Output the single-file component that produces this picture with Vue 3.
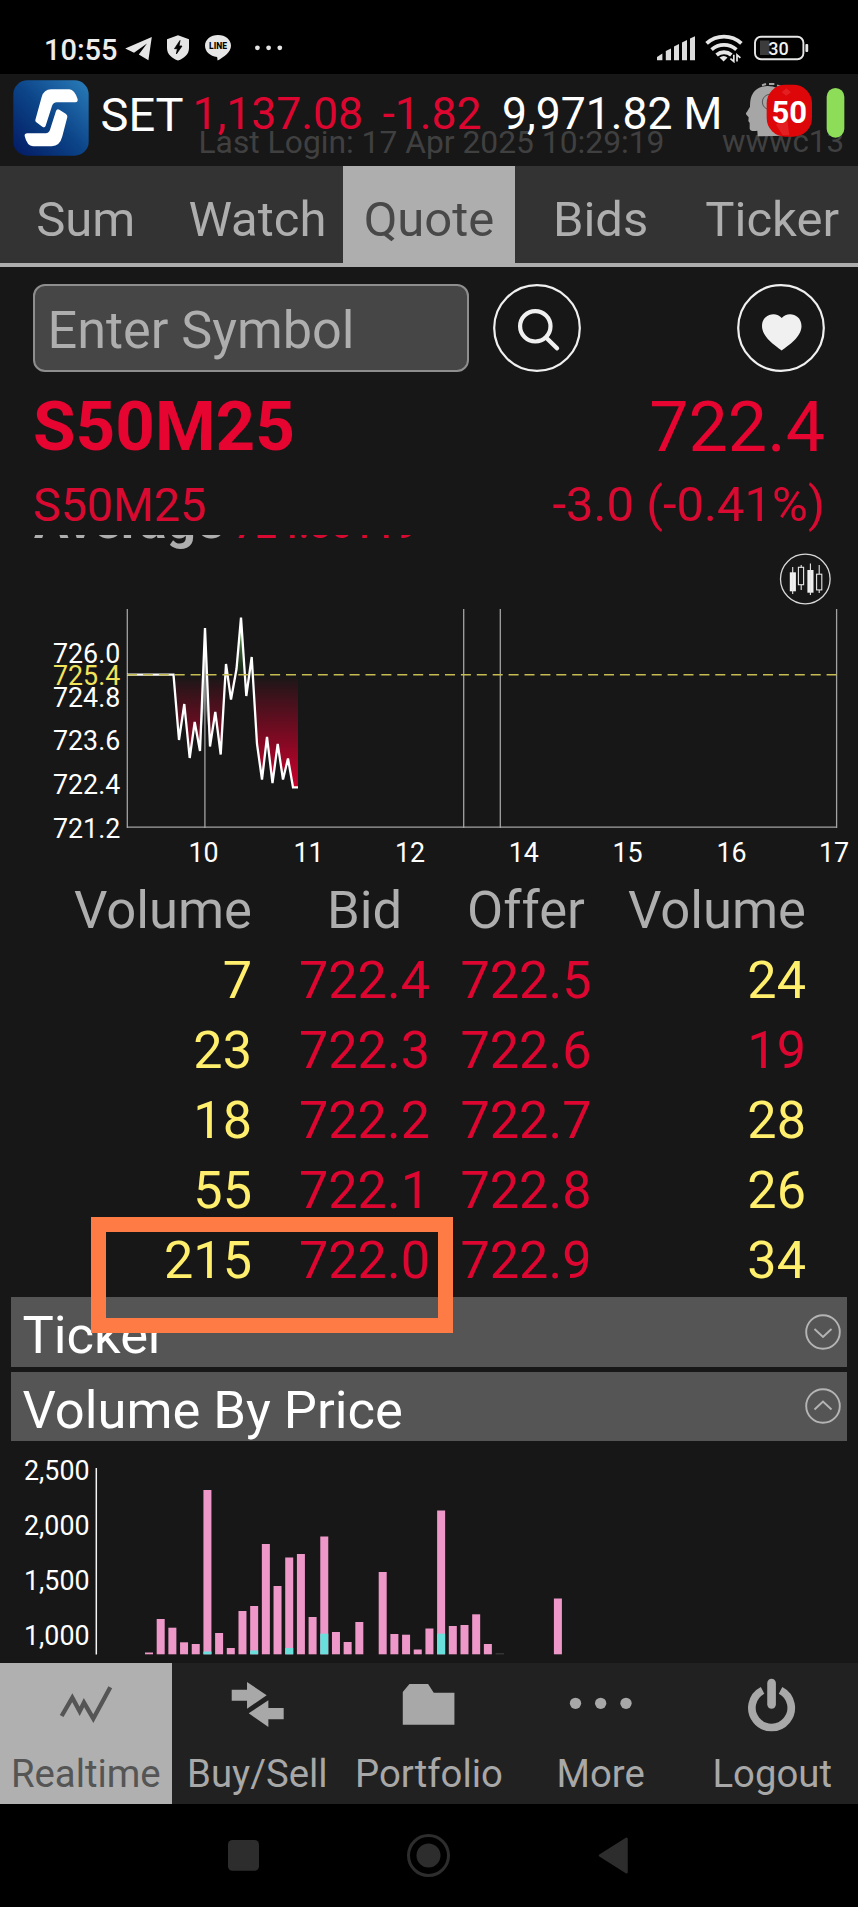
<script setup>
const tabs = ['Sum', 'Watch', 'Quote', 'Bids', 'Ticker']
const activeTab = 'Quote'

const depth = [
  { bv: '7', bid: '722.4', offer: '722.5', ov: '24' },
  { bv: '23', bid: '722.3', offer: '722.6', ov: '19', down: true },
  { bv: '18', bid: '722.2', offer: '722.7', ov: '28' },
  { bv: '55', bid: '722.1', offer: '722.8', ov: '26' },
  { bv: '215', bid: '722.0', offer: '722.9', ov: '34' },
]

const priceLabels = [
  ['726.0', 662.7], ['724.8', 706.5], ['723.6', 750], ['722.4', 794], ['721.2', 837.5], ['725.4', 685, true],
]
const hourLabels = [
  ['10', 203.5], ['11', 308.5], ['12', 410], ['14', 523.7], ['15', 627.5], ['16', 731.5], ['17', 834],
]
const prevClose = 674.7
const series = [
  [127, 674.7], [173.5, 674.7], [179, 740], [184.3, 704], [189.7, 758], [194.7, 722], [200, 751],
  [205, 628], [210, 746.5], [215.3, 712], [220.7, 754.5], [226, 664], [231, 699.5], [236.5, 669],
  [241, 617.5], [246.3, 696], [251.7, 657], [257, 744], [262, 779.5], [267, 737], [272.5, 783],
  [277.7, 744], [283, 779.5], [288, 758.5], [293, 787.3], [298, 787.3],
]
const linePoints = series.map((p) => p.join(',')).join(' ')
const areaPoints = `${linePoints} 298,${prevClose}`

const volumeLabels = [['2,500', 1480.2], ['2,000', 1535], ['1,500', 1590], ['1,000', 1645.3]]
const barTops = [
  1652.5, 1619, 1627.7, 1642.3, 1644, 1490, 1633, 1648, 1611, 1606, 1544, 1586, 1557.5, 1554, 1617, 1536.5,
  1632, 1642, 1622, null, 1572, 1634, 1634.7, 1649.5, 1628.5, 1510.5, 1626, 1625, 1614.3, 1644,
]
const bars = barTops.map((top, i) => ({ x: 145 + i * 11.685, top })).filter((b) => b.top !== null)
bars.push({ x: 553.9, top: 1598.5 })
const openBars = [[5, 1651.5], [9, 1650.5], [12, 1648], [15, 1633.7], [25, 1633.7]]
  .map(([i, top]) => ({ x: 145 + i * 11.685, top }))
</script>

<template>
  <div class="phone">
    <div class="status">
      <span class="clock">10:55</span>
      <svg class="status-icons" width="170" height="30" viewBox="120 32 170 30">
        <path d="M125.2 48.6 L151.8 37 L148.4 60.2 L138.8 54.6 L147 43.5 L134 52.8 Z" fill="#e6e6e6" />
        <path d="M178 35.3 L189 39.3 V48 C189 54.5 184 58.3 178 60.6 C172 58.3 167 54.5 167 48 V39.3 Z" fill="#e6e6e6" />
        <path d="M180 40.5 L174.5 48.7 H177.4 L176.4 54 L182 46 H179 Z" fill="#000" stroke="#000" stroke-width="0.8" />
        <path d="M218 35 C225.4 35 231 39.6 231 45.8 C231 52 224 57 217.6 60.6 C217.2 59 217.6 58 217 57 C210 56.2 205 51.6 205 45.8 C205 39.6 210.6 35 218 35 Z" fill="#e6e6e6" />
        <text x="218" y="49.3" text-anchor="middle" class="line-mark">LINE</text>
        <circle cx="257.4" cy="47.8" r="2.4" fill="#e6e6e6" />
        <circle cx="268.6" cy="47.8" r="2.4" fill="#e6e6e6" />
        <circle cx="279.8" cy="47.8" r="2.4" fill="#e6e6e6" />
      </svg>
      <svg class="status-right" width="158" height="30" viewBox="654 33 158 30">
        <g fill="#dcdcdc">
          <path d="M657 60.3 V57 L662.4 53.5 V60.3 Z" />
          <path d="M665.8 60.3 V51 L671 48.5 V60.3 Z" />
          <path d="M674 60.3 V46.5 L679 44 V60.3 Z" />
          <path d="M682 60.3 V42.5 L687 40 V60.3 Z" />
          <path d="M690 60.3 V38.5 L695 36.3 V60.3 Z" />
        </g>
        <g fill="none" stroke="#e6e6e6" stroke-width="3.8">
          <path d="M706.6 43.4 C716.5 34.4 731.5 34.4 741.4 43.4" />
          <path d="M711.6 49.6 C718.8 43.4 729.2 43.4 736.4 49.6" />
          <path d="M716.6 55 C721 51.3 727 51.3 731.4 55" />
        </g>
        <path d="M719.5 57.5 Q724 54.5 727.5 57.5 L723.6 61.4 Z" fill="#e6e6e6" />
        <path d="M733.8 54.8 V61.5 L730.4 58.6 M737 61.5 V54.8 L740.4 57.8" stroke="#e6e6e6" stroke-width="1.7" fill="none" />
        <rect x="760" y="40.5" width="9.5" height="14.5" fill="#3c3c3c" />
        <rect x="755" y="36.7" width="48.4" height="22.6" rx="6" fill="none" stroke="#e6e6e6" stroke-width="1.9" />
        <rect x="805.4" y="44" width="2.8" height="8" rx="1" fill="#e6e6e6" />
        <text x="778.6" y="54.8" text-anchor="middle" class="battery">30</text>
      </svg>
    </div>

    <header class="top">
      <div class="login"><span>Last Login: 17 Apr 2025 10:29:19</span><span class="host">wwwc13</span></div>
      <svg class="logo" width="76" height="76" viewBox="38 239 228 228">
        <defs>
          <linearGradient id="logoBg" x1="0" y1="1" x2="1" y2="0">
            <stop offset="0" stop-color="#031a63" />
            <stop offset="0.5" stop-color="#0c4488" />
            <stop offset="1" stop-color="#2a7dba" />
          </linearGradient>
        </defs>
        <rect x="39" y="240" width="226" height="226" rx="42" fill="url(#logoBg)" />
        <path d="M105 359 L124 290 Q131 267 152 267 H207 Q223 268 232 297 Q233 306 225 306 H170 Q158 307 155 317 L136 376 Q133 384 126 379 L108 366 Q104 363 105 359 Z" fill="#fff" />
        <path d="M167 332 Q170 324 177 328 L196 340 Q202 344 201 350 L186 408 Q179 437 154 438 H98 Q80 437 73 407 Q72 399 81 399 H136 Q146 398 149 388 Z" fill="#fff" />
      </svg>
      <span class="set">SET</span>
      <span class="idx red">1,137.08</span>
      <span class="idx red">-1.82</span>
      <span class="idx">9,971.82 M</span>
      <svg class="badge" width="112" height="62" viewBox="940 235 336 186">
        <path d="M990 407 L989 390 Q968 394 966 384 L966 368 Q965 364 962 362 L963 350 L955 341 Q954 337 958 333 L967 318 Q966 268 1003 258 Q1045 250 1075 280 L1070 405 Z" fill="#a6a6a6" />
        <path d="M1003 254 l12 -4 M1024 250 h16 M1048 254 l12 4" stroke="#a6a6a6" stroke-width="6" />
        <circle cx="1027" cy="304" r="23" fill="none" stroke="#555" stroke-width="3" />
        <rect x="1017" y="252" width="136" height="156" rx="56" fill="#dd0609" />
        <path d="M1062 275 l14 -12 l14 12 l-14 10 Z M1045 372 L1078 350 L1085 404 H1065 Z" fill="#e83034" opacity="0.6" />
        <text x="1085" y="366" text-anchor="middle" class="badge-n">50</text>
        <rect x="1197" y="262" width="53" height="149" rx="26.5" fill="#8ddd59" />
      </svg>
    </header>

    <nav class="tabs">
      <div v-for="t in tabs" :key="t" class="tab" :class="{ on: t === activeTab }">{{ t }}</div>
    </nav>

    <main class="body">
      <div class="search">
        <div class="field">Enter Symbol</div>
        <svg class="find" width="88" height="88" viewBox="493 284 88 88">
          <circle cx="537" cy="328" r="42.8" fill="none" stroke="#f0f0f0" stroke-width="2.2" />
          <circle cx="535.3" cy="326.3" r="15.2" fill="none" stroke="#f0f0f0" stroke-width="4.2" />
          <path d="M546.5 338 L557 348.3" stroke="#f0f0f0" stroke-width="4.4" stroke-linecap="round" />
        </svg>
        <svg class="fav" width="88" height="88" viewBox="737 284 88 88">
          <circle cx="781" cy="328" r="42.8" fill="none" stroke="#f0f0f0" stroke-width="2.2" />
          <path d="M781.7 350.5 C775 345.5 762 337 762 326 C762 313.5 776.5 311 781.7 318 C787 311 801.5 313.5 801.5 326 C801.5 337 788.5 345.5 781.7 350.5 Z" fill="#f0f0f0" />
        </svg>
      </div>

      <div class="quote"><b>S50M25</b><span>722.4</span></div>
      <div class="sub"><span class="name">S50M25</span><span>-3.0 (-0.41%)</span></div>

      <div class="scroll">
        <div class="avg"><b>Average</b><span>724.80119</span></div>

        <svg class="chart" width="858" height="324" viewBox="0 551 858 324">
          <defs>
            <linearGradient id="loss" gradientUnits="userSpaceOnUse" x1="0" y1="675" x2="0" y2="787">
              <stop offset="0" stop-color="#c8002b" stop-opacity="0" />
              <stop offset="0.2" stop-color="#c8002b" stop-opacity="0.22" />
              <stop offset="1" stop-color="#cc002c" />
            </linearGradient>
            <linearGradient id="gain" gradientUnits="userSpaceOnUse" x1="0" y1="618" x2="0" y2="675">
              <stop offset="0" stop-color="#7fd06a" />
              <stop offset="1" stop-color="#2a6a24" stop-opacity="0.15" />
            </linearGradient>
            <clipPath id="above"><rect x="127" y="600" width="710" height="74.7" /></clipPath>
            <clipPath id="below"><rect x="127" y="674.7" width="710" height="153" /></clipPath>
          </defs>
          <circle cx="805.3" cy="579" r="24.8" fill="none" stroke="#d8d8d8" stroke-width="1.3" />
          <g fill="#f0f0f0">
            <rect x="789.8" y="572.3" width="6.1" height="19" />
            <rect x="807.4" y="570" width="6.1" height="22.7" />
          </g>
          <g fill="none" stroke="#e6e6e6" stroke-width="1.1">
            <path d="M792.7 567 V594 M810.4 563.5 V595 M801.2 565 V567.5 M801.2 585 V590 M819.2 565 V574 M819.2 590 V593" />
            <rect x="798.4" y="567.3" width="5.2" height="17.4" />
            <rect x="816.6" y="574.2" width="5.2" height="15.7" />
          </g>

          <polygon :points="areaPoints" fill="url(#gain)" clip-path="url(#above)" />
          <polygon :points="areaPoints" fill="url(#loss)" clip-path="url(#below)" />
          <path d="M204.9 632 L200.5 740 L204.9 700 L209.5 740 Z" fill="#8a8a8a" opacity="0.6" />
          <path d="M127.3 609 V828 M463.7 609 V828 M500.3 609 V828 M836.6 609 V828 M204.9 640 V828 M127 827.2 H837" fill="none" stroke="#a2a2a2" stroke-width="1.3" />
          <polyline :points="linePoints" fill="none" stroke="#fff" stroke-width="2.3" stroke-linejoin="miter" stroke-miterlimit="2" />
          <path d="M127 674.8 H836.5" stroke="#c6bb52" stroke-width="1.5" stroke-dasharray="10 5.9" />
          <text v-for="[t, y, ref] in priceLabels" :key="t" x="120.3" :y="y" text-anchor="end" class="axis" :class="{ ref }">{{ t }}</text>
          <text v-for="[t, x] in hourLabels" :key="t" :x="x" y="862" text-anchor="middle" class="axis">{{ t }}</text>
        </svg>

        <div class="depth">
          <div class="row head"><span>Volume</span><span>Bid</span><span>Offer</span><span>Volume</span></div>
          <div v-for="r in depth" :key="r.bid" class="row">
            <span class="vol">{{ r.bv }}</span><span class="px">{{ r.bid }}</span>
            <span class="px">{{ r.offer }}</span><span :class="r.down ? 'px' : 'vol'">{{ r.ov }}</span>
          </div>
          <div class="marker"></div>
        </div>

        <div class="panel">
          <span>Ticker</span>
          <svg width="38" height="38" viewBox="-19 -19 38 38" fill="none" stroke="#b4b4b4" stroke-width="1.9">
            <circle r="16.8" /><path d="M-8.5 -3 L0 5 L8.5 -3" />
          </svg>
        </div>
        <div class="panel">
          <span>Volume By Price</span>
          <svg width="38" height="38" viewBox="-19 -19 38 38" fill="none" stroke="#b4b4b4" stroke-width="1.9">
            <circle r="16.8" /><path d="M-8.5 3.5 L0 -4.5 L8.5 3.5" />
          </svg>
        </div>

        <svg class="chart" width="858" height="222" viewBox="0 1441 858 222">
          <path d="M96.3 1468 V1654.5" stroke="#f4f4f4" stroke-width="1.5" />
          <text v-for="[t, y] in volumeLabels" :key="t" x="89.5" :y="y" text-anchor="end" class="axis">{{ t }}</text>
          <rect v-for="b in bars" :key="b.x" :x="b.x" :y="b.top" width="8" :height="1654.3 - b.top" fill="#ee98c9" />
          <rect v-for="b in openBars" :key="b.x" :x="b.x" :y="b.top" width="8" :height="1654.3 - b.top" fill="#6ae0dc" />
          <rect x="495.6" y="1653" width="8.5" height="1.5" fill="#343434" />
        </svg>
      </div>
    </main>

    <nav class="bottom">
      <div class="item on">
        <svg width="171.6" height="80" viewBox="0 39 515 240"><polyline points="185,198 217,143 239,184 252,158 280,206 331,112" fill="none" stroke="#555" stroke-width="13" stroke-miterlimit="6" /></svg>
        <span>Realtime</span>
      </div>
      <div class="item">
        <svg width="171.6" height="80" viewBox="514.8 39 515 240" fill="#a8a8a8">
          <path d="M694 119 H740 V96 L799 136 L740 176 V152 H694 Z" /><path d="M850 174 H804 V151 L745 190 L804 231 V208 H850 Z" />
        </svg>
        <span>Buy/Sell</span>
      </div>
      <div class="item">
        <svg width="171.6" height="80" viewBox="1029.6 39 515 240" fill="#a8a8a8"><path d="M1209 224 V126 L1229 102 H1285 L1302 128 H1364 V224 Z" /></svg>
        <span>Portfolio</span>
      </div>
      <div class="item">
        <svg width="171.6" height="80" viewBox="260.4 39 515 240" fill="#a8a8a8"><circle cx="442" cy="160" r="17" /><circle cx="517.5" cy="160" r="17" /><circle cx="593.5" cy="160" r="17" /></svg>
        <span>More</span>
      </div>
      <div class="item">
        <svg width="171.6" height="80" viewBox="775.2 39 515 240" fill="none" stroke="#a8a8a8">
          <path d="M1005 121 A59 59 0 1 0 1059 121" stroke-width="23" /><path d="M1032 99 V163" stroke-width="26" stroke-linecap="round" />
        </svg>
        <span>Logout</span>
      </div>
    </nav>

    <svg class="system" width="858" height="103" viewBox="0 1804 858 103">
      <rect x="228" y="1840" width="31" height="30.7" rx="4.5" fill="#2d2d2d" />
      <circle cx="428.5" cy="1855.5" r="20" fill="none" stroke="#2d2d2d" stroke-width="3" />
      <circle cx="428.5" cy="1855.5" r="12" fill="#2d2d2d" />
      <path d="M600 1855.5 L626.5 1838.8 V1872.2 Z" fill="#2d2d2d" stroke="#2d2d2d" stroke-width="2.5" stroke-linejoin="round" />
    </svg>
  </div>
</template>

<style>
body { background: #000; }
</style>

<style scoped>
.phone { width: 858px; height: 1907px; overflow: hidden; background: #000; color: #fff; font-family: Roboto, "Noto Sans", sans-serif; white-space: nowrap; }
svg { display: block; flex: none; }
.red, .px { color: #dc0630; }

.status { height: 74px; display: flex; align-items: flex-start; }
.clock { margin: 35px 0 0 44px; width: 76px; font-size: 29px; line-height: 30px; font-weight: 500; color: #ececec; }
.status-icons { margin-top: 32px; }
.status-right { margin: 33px 0 0 364px; }
.line-mark { font: 800 8.5px Roboto, sans-serif; fill: #000; }
.battery { font: 500 18px Roboto, sans-serif; fill: #f0f0f0; }

.top { position: relative; height: 92px; background: #171717; display: grid; grid-template-columns: 100.5px 92px 190px 119.5px 243px 112px; align-items: start; }
.logo { margin: 5.5px 0 0 12.7px; }
.set { font-size: 47px; line-height: 81px; position: relative; }
.idx { font-size: 44.5px; line-height: 81px; position: relative; }
.login { position: absolute; left: 198.5px; right: 14px; top: 48px; display: flex; justify-content: space-between; font-size: 31.8px; line-height: 40px; color: #404040; }
.host { font-size: 31.3px; }
.badge { position: relative; margin: 4.5px 0 0 -4px; }
.badge-n { font: 700 93px Roboto, sans-serif; fill: #fff; }

.tabs { height: 97px; border-bottom: 4px solid #aeaeae; background: #333; display: grid; grid-template-columns: repeat(5, 1fr); }
.tab { padding-top: 10px; text-align: center; font-size: 49px; line-height: 87px; color: #aeaeae; }
.tab.on { background: #aeaeae; color: #484848; }

.body { height: 1396px; background: #171717; overflow: hidden; }
.search { display: flex; padding: 17px 33px 0; }
.field { box-sizing: border-box; width: 436px; height: 88px; border: 2px solid #8e8e8e; border-radius: 12px; background: #464646; color: #aeaeae; font-size: 52.2px; line-height: 90px; padding-left: 12.5px; }
.find { margin-left: 24px; }
.fav { margin-left: auto; }
.quote, .sub { display: flex; justify-content: space-between; padding: 0 33px; color: #e60430; }
.quote { font-size: 70px; line-height: 110px; }
.quote b { font-size: 69.2px; }
.sub { font-size: 49px; line-height: 46px; height: 53px; color: #d80a32; }
.name { font-size: 46.6px; }
.scroll { height: 1128px; overflow: hidden; }
.avg { margin-top: -44px; height: 60px; line-height: 60px; padding-left: 34px; display: flex; align-items: baseline; font-size: 51.5px; color: #aeaeae; }
.avg span { font-size: 38px; font-weight: 500; color: #d80a32; margin-left: 10px; }
.axis { font: 400 26.8px Roboto, sans-serif; fill: #fff; }
.ref { fill: #f2e45a; }

.depth { position: relative; padding-bottom: 2px; }
.row { display: grid; grid-template-columns: 284px 161px 162px 251px; text-align: center; font-size: 52.2px; line-height: 71.4px; height: 70px; }
.row span:first-child { text-align: right; padding-right: 32px; }
.row span:last-child { text-align: right; padding-right: 52px; }
.head { color: #aeaeae; font-size: 52.6px; }
.vol { color: #ffef6c; }
.marker { position: absolute; left: 90.5px; top: 342px; width: 362px; height: 116px; box-sizing: border-box; border: 15.5px solid #ff7b45; z-index: 2; }

.panel { margin: 0 11px 5px; height: 69.5px; background: #555; display: flex; justify-content: space-between; align-items: center; padding: 0 5px 0 11.5px; }
.panel span { font-size: 52.5px; line-height: 60px; padding-top: 7px; }
.panel + .panel { margin-bottom: 0; }

.bottom { height: 141px; background: #212121; display: grid; grid-template-columns: repeat(5, 1fr); color: #a8a8a8; }
.item { display: flex; flex-direction: column; align-items: center; font-size: 38.3px; }
.item span { line-height: 61px; }
.item.on { background: #b0b0b0; color: #555; }
</style>
